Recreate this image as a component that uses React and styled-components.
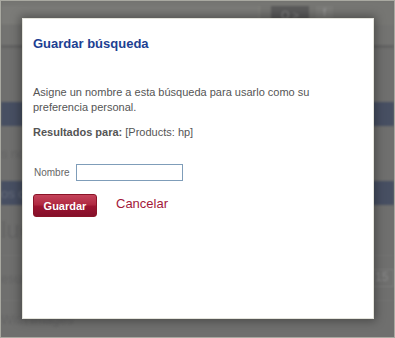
import React from 'react';
import styled, { createGlobalStyle } from 'styled-components';

const Global = createGlobalStyle`
  html, body { margin: 0; padding: 0; background: #fff; }
  body { font-family: "Liberation Sans", Arial, sans-serif; }
`;

export default function App() {
  return (
    <>
      <Global />
      <Frame>
        <Page>
          <TopBar>
            <Search />
            <DarkBtn>Q &gt;</DarkBtn>
            <SmallBtn>f</SmallBtn>
          </TopBar>
          <SubNav />
          <Band h={54} />
          <Band h={24} $blue />
          <Band h={55}><Faint>s no</Faint></Band>
          <Band h={24} $blue><Faint $light>os c</Faint></Band>
          <Band h={50}><Big>luc</Big></Band>
          <Band h={44} $line><Faint>esul</Faint><Count>15</Count></Band>
          <Band h={36} $line><Faint>With Images</Faint></Band>
        </Page>

        <Dialog>
          <Title>Guardar búsqueda</Title>
          <Text>Asigne un nombre a esta búsqueda para usarlo como su preferencia personal.</Text>
          <Text $gap><strong>Resultados para:</strong> [Products: hp]</Text>
          <FieldRow>
            <Label>Nombre</Label>
            <Input type="text" />
          </FieldRow>
          <Actions>
            <SaveBtn>Guardar</SaveBtn>
            <CancelLink href="#">Cancelar</CancelLink>
          </Actions>
        </Dialog>
      </Frame>
    </>
  );
}

const Frame = styled.div`
  position: relative;
  width: 395px;
  height: 338px;
  box-sizing: border-box;
  border: 1px solid #a9a9a1;
  background: #6f6f6e;
  overflow: hidden;
`
const Page = styled.div`
  display: flex;
  flex-direction: column;
  height: 100%;
  filter: blur(1.2px);
`
const TopBar = styled.div`
  height: 24px;
  box-sizing: border-box;
  padding-top: 5px;
  display: flex;
  align-items: flex-start;
  background: #767673;
`
const Search = styled.div`
  width: 258px;
  height: 18px;
  background: #7b7b78;
  border-right: 1px solid #86867f;
`
const DarkBtn = styled.div`
  width: 38px;
  height: 19px;
  margin-left: 11px;
  background: #5b5b5b;
  color: #8a8a8a;
  font-size: 11px;
  line-height: 19px;
  text-align: center;
`
const SmallBtn = styled.div`
  width: 17px;
  height: 17px;
  margin-left: 7px;
  background: #7c7c79;
  color: #999;
  font-size: 11px;
  text-align: center;
`
const SubNav = styled.div`
  height: 22px;
  background: #737371;
  border-bottom: 3px solid #626262;
`
const Band = styled.div`
  height: ${p => p.h}px;
  flex: none;
  display: flex;
  align-items: center;
  justify-content: space-between;
  background: ${p => (p.$blue ? '#474f62' : 'transparent')};
  border-top: ${p => (p.$line ? '1px solid #747474' : 'none')};
`
const Faint = styled.span`
  font-size: 13px;
  color: ${p => (p.$light ? '#646a78' : '#646464')};
`
const Big = styled.span`
  font-size: 24px;
  color: #656565;
`
const Count = styled.span`
  width: 18px;
  height: 16px;
  border: 1px solid #7c7c7c;
  font-size: 12px;
  color: #8a8a8a;
  padding-left: 3px;
`

const Dialog = styled.div`
  position: absolute;
  left: 21px;
  top: 17px;
  width: 352px;
  height: 301px;
  box-sizing: border-box;
  border: 1px solid #e4e4dc;
  background: #fff;
  padding: 17px 10px;
  box-shadow: 0 0 9px 2px rgba(0, 0, 0, 0.35);
`
const Title = styled.h2`
  margin: 0 0 34px;
  font-size: 13px;
  line-height: 15px;
  font-weight: bold;
  color: #1d3f92;
`
const Text = styled.p`
  margin: ${p => (p.$gap ? '10px' : '0')} 0 0;
  font-size: 11px;
  line-height: 15px;
  color: #555;
  strong { font-weight: bold; }
`
const FieldRow = styled.div`
  display: flex;
  align-items: center;
  gap: 6px;
  margin-top: 24px;
`
const Label = styled.label`
  font-size: 10px;
  color: #666;
  padding-left: 1px;
`
const Input = styled.input`
  width: 107px;
  height: 17px;
  box-sizing: border-box;
  margin: 0;
  padding: 0 3px;
  border: 1px solid #7f9db9;
  font-size: 11px;
`
const Actions = styled.div`
  display: flex;
  align-items: flex-start;
  gap: 19px;
  margin-top: 13px;
`
const SaveBtn = styled.button`
  width: 64px;
  height: 23px;
  margin: 0;
  padding: 0;
  border: 1px solid #8a1427;
  border-radius: 3px;
  background: linear-gradient(to bottom, #c4435a 0%, #b02a42 45%, #9a1430 55%, #85102a 100%);
  color: #fff;
  font-family: "Liberation Sans", Arial, sans-serif;
  font-size: 11px;
  font-weight: bold;
  cursor: pointer;
`
const CancelLink = styled.a`
  margin-top: 2px;
  font-size: 13px;
  line-height: 15px;
  color: #a3173a;
  text-decoration: none;
`
